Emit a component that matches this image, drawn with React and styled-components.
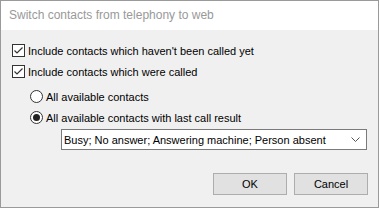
import React from "react";
import styled, { createGlobalStyle } from "styled-components";

const Global = createGlobalStyle`
  html, body { margin: 0; padding: 0; background: #ffffff; }
  * { box-sizing: border-box; }
`;

const Window = styled.div`
  width: 379px;
  height: 208px;
  border: 1px solid #9a9a9a;
  display: flex;
  flex-direction: column;
  font-family: "Liberation Sans", Arial, sans-serif;
  font-size: 11px;
  color: #000;
`;

const TitleBar = styled.div`
  height: 29px;
  background: #ffffff;
  color: #999999;
  font-size: 12px;
  display: flex;
  align-items: center;
  padding-left: 8px;
  padding-bottom: 1px;
`;

const Body = styled.div`
  flex: 1;
  background: #f0f0f0;
  padding: 10px 10px 0 11px;
  display: flex;
  flex-direction: column;
`;

const Row = styled.label`
  height: 21px;
  display: flex;
  align-items: center;
  gap: 3px;
  padding-left: ${(p) => p.$indent || 0}px;
  margin-top: ${(p) => p.$mt || 0}px;
  white-space: nowrap;
`;

const Select = styled.div`
  margin: 1px 0 0 49px;
  height: 21px;
  width: 306px;
  background: #fff;
  border: 1px solid #7a7a7a;
  display: flex;
  align-items: center;
  justify-content: space-between;
  padding: 0 6px 0 2px;
  white-space: nowrap;
  overflow: hidden;
`;

const Buttons = styled.div`
  display: flex;
  justify-content: flex-end;
  gap: 7px;
  margin-top: 23px;
`;

const Button = styled.div`
  width: 74px;
  height: 22px;
  background: #e1e1e1;
  border: 1px solid #adadad;
  display: flex;
  align-items: center;
  justify-content: center;
`;

const CheckBox = () => (
  <svg width="13" height="13" viewBox="0 0 13 13">
    <rect x="0.5" y="0.5" width="12" height="12" fill="#fff" stroke="#333" />
    <path d="M2.5 6.5 L5 9 L10.5 3.5" fill="none" stroke="#333" strokeWidth="1.2" />
  </svg>
);

const Radio = ({ checked }) => (
  <svg width="13" height="13" viewBox="0 0 13 13">
    <circle cx="6.5" cy="6.5" r="6" fill="#fff" stroke="#333" />
    {checked && <circle cx="6.5" cy="6.5" r="3.5" fill="#222" />}
  </svg>
);

const Chevron = () => (
  <svg width="9" height="5" viewBox="0 0 9 5">
    <path d="M0.5 0.5 L4.5 4.5 L8.5 0.5" fill="none" stroke="#555" strokeWidth="1" />
  </svg>
);

export default function App() {
  return (
    <>
      <Global />
      <Window>
        <TitleBar>Switch contacts from telephony to web</TitleBar>
        <Body>
          <Row>
            <CheckBox />
            Include contacts which haven't been called yet
          </Row>
          <Row>
            <CheckBox />
            Include contacts which were called
          </Row>
          <Row $indent={18} $mt={4}>
            <Radio />
            All available contacts
          </Row>
          <Row $indent={18}>
            <Radio checked />
            All available contacts with last call result
          </Row>
          <Select>
            <span>Busy; No answer; Answering machine; Person absent</span>
            <Chevron />
          </Select>
          <Buttons>
            <Button>OK</Button>
            <Button>Cancel</Button>
          </Buttons>
        </Body>
      </Window>
    </>
  );
}
